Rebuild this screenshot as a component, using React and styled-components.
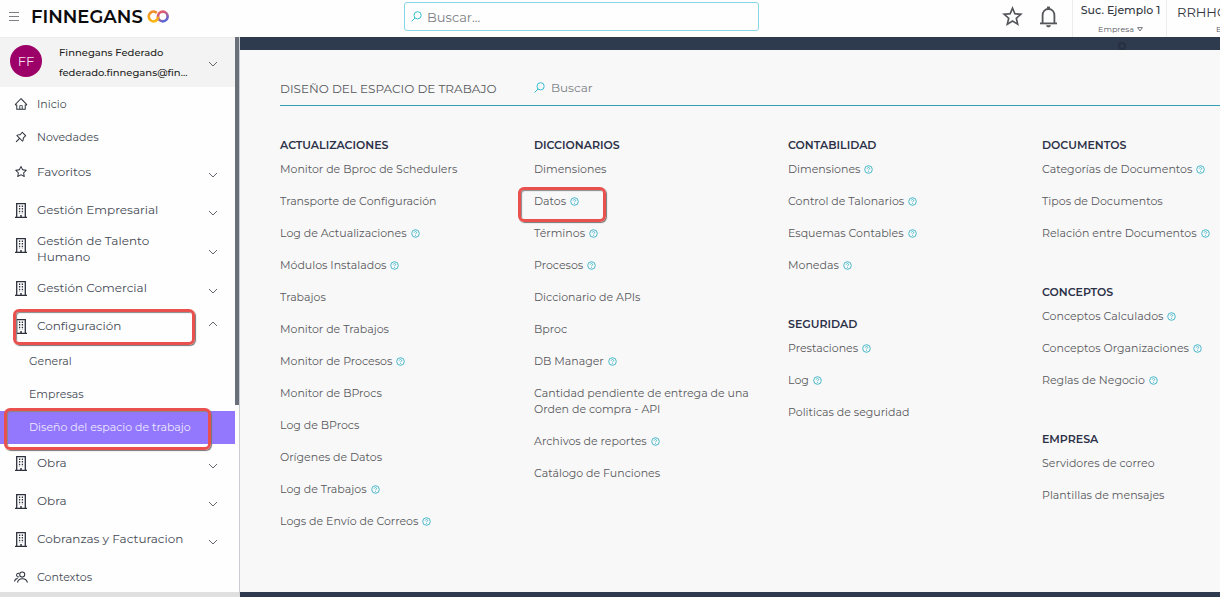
// Import necessary dependencies
import React from 'react';
import styled, { createGlobalStyle, css } from 'styled-components';
import { AiOutlineHome, AiOutlinePushpin, AiOutlineStar } from 'react-icons/ai';
import { MdStarBorder } from 'react-icons/md';

const GlobalStyle = createGlobalStyle`
  *, *::before, *::after {
    box-sizing: border-box;
  }

  body {
    margin: 0;
    background-color: #2e3a4d;
    font-family: Montserrat, Inter, "Liberation Sans", sans-serif;
    color: #585a5e;
    overflow: hidden;
  }

  button, input {
    font-family: inherit;
    color: inherit;
  }

  button {
    border: 0;
    padding: 0;
    background: none;
    cursor: pointer;
  }

  a {
    color: inherit;
    text-decoration: none;
  }
`;

const Page = styled.div`
  display: flex;
  flex-direction: column;
  height: 100vh;
`;

// Top bar
const Header = styled.header`
  display: flex;
  flex: none;
  height: 37px;
  background-color: #fefefe;
  overflow: hidden;
`;

const Brand = styled.div`
  display: flex;
  align-items: center;
  flex: none;
  width: 240px;
  padding: 0 0 4px 9px;
`;

const MenuButton = styled.button`
  display: flex;
  margin-right: 12px;
`;

const BrandName = styled.span`
  font-size: 18px;
  font-weight: 600;
  line-height: 24px;
  color: #0b0b0d;
  margin-right: 4px;
`;

const SearchArea = styled.div`
  flex: 1;
  min-width: 0;
  padding: 2px 241px 0 164px;
`;

const SearchBox = styled.label`
  display: flex;
  align-items: center;
  gap: 5px;
  height: 29px;
  padding: 0 6px;
  border: 1px solid #86d6e8;
  border-radius: 3px;
`;

const SearchInput = styled.input`
  flex: 1;
  min-width: 0;
  border: 0;
  padding: 0;
  outline: none;
  background: none;
  font-size: ${(props) => (props.$small ? '12px' : '13px')};

  &::placeholder {
    color: #7c7f85;
    opacity: 1;
  }
`;

const Actions = styled.div`
  display: flex;
  flex: none;
  width: 220px;
`;

const ActionButton = styled.button`
  display: flex;
  align-items: center;
  flex: none;
  height: 33px;
  padding-right: 14px;
  color: #55565a;
`;

const Selector = styled.button`
  display: flex;
  flex-direction: column;
  align-items: center;
  flex: none;
  width: ${(props) => props.$width};
  padding: 2px 8px 0 10px;
  border-left: 1px solid #ececee;
`;

const SelectorName = styled.span`
  font-size: ${(props) => (props.$large ? '13px' : '11px')};
  font-weight: ${(props) => (props.$large ? 400 : 500)};
  line-height: ${(props) => (props.$large ? '20px' : '16px')};
  color: #32363f;
  white-space: nowrap;
  align-self: ${(props) => (props.$large ? 'flex-start' : 'center')};
`;

const SelectorKind = styled.span`
  display: flex;
  align-items: center;
  gap: 3px;
  margin-top: auto;
  padding-bottom: 2px;
  font-size: 8px;
  line-height: 12px;
  color: #55585f;
`;

// Side menu
const Body = styled.div`
  display: flex;
  flex: 1;
  min-height: 0;
`;

const Sidebar = styled.aside`
  position: relative;
  flex: none;
  width: 240px;
  background-color: #fefefe;
  border-right: 1px solid #c9ccd1;
  border-bottom: 5px solid #e0e0e0;
  overflow: hidden;
`;

const ScrollThumb = styled.div`
  position: absolute;
  top: 0;
  right: 0;
  width: 4px;
  height: 368px;
  background-color: #69707a;
`;

const Profile = styled.button`
  display: flex;
  align-items: center;
  width: 235px;
  height: 50px;
  padding: 0 17px 4px 10px;
  border-top: 1px solid #ececec;
  background-color: #f3f3f3;
  text-align: left;
`;

const Avatar = styled.span`
  flex: none;
  width: 32px;
  height: 32px;
  border-radius: 50%;
  background-color: #9c0068;
  color: #f6dfee;
  font-size: 13px;
  line-height: 32px;
  text-align: center;
`;

const ProfileText = styled.span`
  flex: 1;
  margin-left: 17px;
  font-size: 10px;
  font-weight: 500;
  line-height: 20px;
  color: #1d1e22;
  padding-top: 4px;
`;

const ProfileLine = styled.span`
  display: block;
`;

const Nav = styled.nav`
  width: 235px;
`;

const highlight = css`
  position: relative;

  &::after {
    content: '';
    position: absolute;
    border: 3px solid #ea504d;
    border-radius: 6px;
    box-shadow: 1px 1px 1px #777, inset 1px 1px 1px #888;
    pointer-events: none;
  }
`;

const NavRow = styled.button`
  display: flex;
  align-items: center;
  width: 100%;
  min-height: ${(props) => (props.$leaf ? '33px' : '38px')};
  padding: 4px 17px 4px 14px;
  font-size: ${(props) => (props.$small ? '11px' : '12px')};
  line-height: 16px;
  color: #454a55;
  text-align: left;

  ${(props) => props.$marked && css`
    ${highlight}

    &::after {
      inset: 2px 40px 0 13px;
    }
  `}
`;

const NavIcon = styled.span`
  display: flex;
  justify-content: center;
  flex: none;
  width: 14px;
  margin-right: 9px;
  padding-bottom: ${(props) => (props.$wrap ? '8px' : '0')};
  color: #2c313c;
`;

const NavLabel = styled.span`
  flex: 1;
  padding-right: 8px;
`;

const ChevronBox = styled.span`
  display: flex;
  flex: none;
  padding-top: ${(props) => (props.$up ? '0' : '6px')};
  padding-bottom: ${(props) => (props.$up ? '4px' : '0')};
`;

const SubLink = styled.a`
  display: block;
  height: 33px;
  padding-left: 29px;
  font-size: 11px;
  line-height: 33px;
  color: ${(props) => (props.$active ? '#eee9ff' : '#454a55')};
  background-color: ${(props) => (props.$active ? '#9378fd' : 'transparent')};

  ${(props) => props.$active && css`
    ${highlight}

    &::after {
      inset: -3px 24px -6px 4px;
    }
  `}
`;

// Workspace panel
const Main = styled.main`
  position: relative;
  flex: 1;
  min-width: 0;
  padding: 13px 0 5px;
  background-color: #2e3a4d;
`;

const Knob = styled.span`
  position: absolute;
  top: 5px;
  right: 94px;
  width: 8px;
  height: 8px;
  border: 2px solid #273142;
  border-radius: 50%;
`;

const Panel = styled.section`
  height: 100%;
  padding: 22px 0 0 40px;
  background-color: #f8f8f8;
  overflow: hidden;
`;

const PanelHead = styled.div`
  display: flex;
  align-items: center;
  height: 34px;
  border-bottom: 1px solid #35a0b4;
`;

const PanelTitle = styled.h1`
  flex: none;
  width: 254px;
  margin: 0;
  font-size: 12px;
  font-weight: 400;
  line-height: 16px;
  color: #55575b;
`;

const PanelSearch = styled.label`
  display: flex;
  align-items: center;
  gap: 6px;
  padding-bottom: 2px;
`;

const Columns = styled.div`
  display: grid;
  grid-template-columns: repeat(4, minmax(254px, 1fr));
  padding-top: 31px;
`;

const Group = styled.section`
  margin-bottom: 43px;
`;

const GroupTitle = styled.h2`
  margin: 0 0 8px;
  font-size: 11px;
  font-weight: 600;
  line-height: 16px;
  color: #2c3148;
`;

const LinkList = styled.ul`
  display: flex;
  flex-direction: column;
  gap: 16px;
  margin: 0;
  padding: 0;
  list-style: none;
`;

const LinkItem = styled.li`
  display: flex;
  align-items: center;
  gap: 4px;
  max-width: 226px;
  font-size: 11px;
  line-height: 16px;
  color: #58595d;

  ${(props) => props.$marked && css`
    ${highlight}

    &::after {
      top: -6px;
      left: -16px;
      width: 88px;
      height: 35px;
    }
  `}
`;

const HelpButton = styled.button`
  display: flex;
  flex: none;
`;

const Magnifier = () => (
  <svg width="11" height="11" viewBox="0 0 11 11" fill="none" stroke="#35bfd2" aria-hidden="true">
    <circle cx="6.6" cy="4.3" r="3.6" />
    <path d="M4 7L.6 10.4" />
  </svg>
);

const Chevron = ({ up }) => (
  <svg width="10" height="6" viewBox="0 0 10 6" fill="none" stroke="#63666c" aria-hidden="true">
    <path d={up ? 'M1 5L5 1L9 5' : 'M1 1L5 5L9 1'} />
  </svg>
);

const Building = () => (
  <svg width="12" height="15" viewBox="0 0 12 15" fill="none" stroke="currentColor" aria-hidden="true">
    <path d="M1.7 14V.7H10.3V14M0 14.3H12" strokeWidth="1.3" />
    <path d="M4.6 2.5V10.5M7.4 2.5V10.5" strokeWidth="1.3" strokeDasharray="1.5 1.1" />
    <path d="M6 12V14" strokeWidth="1.5" />
  </svg>
);

const People = () => (
  <svg width="15" height="13" viewBox="0 0 15 13" fill="none" stroke="currentColor" strokeWidth="1.1" aria-hidden="true">
    <circle cx="8.8" cy="3.4" r="2.7" />
    <path d="M5.6 2.2C3.6 1.2 1.9 3.6 3.2 5.2C3.8 6 4.9 6.1 5.7 5.6" />
    <path d="M3.8 12C4.4 6.6 13.2 6.2 14.4 12" />
    <path d="M.6 10.8C.8 9 2 7.8 4 7.6" />
  </svg>
);

const Bell = () => (
  <svg width="19" height="22" viewBox="0 0 19 22" fill="none" stroke="currentColor" strokeWidth="1.8" aria-hidden="true">
    <path d="M3.6 17V9.4C3.6 5.6 6 3 9.5 3S15.4 5.6 15.4 9.4V17" />
    <path d="M1 17.4H18" />
    <path d="M9.5 .6V3" strokeWidth="3" />
    <path d="M7 19.2H12C11.6 20.6 10.8 21.3 9.5 21.3S7.4 20.6 7 19.2Z" fill="currentColor" stroke="none" />
  </svg>
);

const LoopLogo = () => (
  <svg width="22" height="13" viewBox="0 0 22 13" fill="none" strokeWidth="2.7" aria-hidden="true">
    <defs>
      <linearGradient id="loopLeft" x1="0" y1="0" x2="0" y2="1">
        <stop offset="0" stopColor="#f08a2c" />
        <stop offset="1" stopColor="#fbb610" />
      </linearGradient>
      <linearGradient id="loopRight" x1="0" y1="0" x2="0.6" y2="1">
        <stop offset="0" stopColor="#ee5a5e" />
        <stop offset="0.5" stopColor="#c0608c" />
        <stop offset="1" stopColor="#5a66d8" />
      </linearGradient>
    </defs>
    <circle cx="15.8" cy="6.5" r="4.8" stroke="url(#loopRight)" />
    <path d="M9.8 2.9A4.8 4.8 0 1 0 9.8 10.1C10.6 9.2 11 8.2 11.1 6.6" stroke="url(#loopLeft)" />
  </svg>
);

const HelpIcon = () => (
  <svg width="9" height="9" viewBox="0 0 9 9" fill="none" stroke="#36b2c6" aria-hidden="true">
    <circle cx="4.5" cy="4.5" r="3.8" strokeWidth="0.9" />
    <path d="M3.2 3.6C3.3 2.1 5.8 2.2 5.7 3.6C5.6 4.4 4.5 4.3 4.5 5.3M4.5 6V6.9" strokeWidth="0.8" />
  </svg>
);

const DropMark = () => (
  <svg width="6" height="5" viewBox="0 0 6 5" fill="none" stroke="#55585f" strokeWidth="0.8" aria-hidden="true">
    <path d="M.6 .6H5.4L3 4Z" />
  </svg>
);

const menu = [
  { id: 1, label: 'Inicio', icon: <AiOutlineHome size={14} />, leaf: true, small: true },
  { id: 2, label: 'Novedades', icon: <AiOutlinePushpin size={14} />, leaf: true, small: true },
  { id: 3, label: 'Favoritos', icon: <AiOutlineStar size={14} />, chevron: true },
  { id: 4, label: 'Gestión Empresarial', icon: <Building />, chevron: true },
  { id: 5, label: 'Gestión de Talento Humano', icon: <Building />, chevron: true, wrap: true },
  { id: 6, label: 'Gestión Comercial', icon: <Building />, chevron: true },
  {
    id: 7,
    label: 'Configuración',
    icon: <Building />,
    chevron: true,
    marked: true,
    children: ['General', 'Empresas', 'Diseño del espacio de trabajo'],
  },
  { id: 8, label: 'Obra', icon: <Building />, chevron: true },
  { id: 9, label: 'Obra', icon: <Building />, chevron: true },
  { id: 10, label: 'Cobranzas y Facturacion', icon: <Building />, chevron: true },
  { id: 11, label: 'Contextos', icon: <People />, small: true },
];

const columns = [
  [
    {
      title: 'ACTUALIZACIONES',
      links: [
        { text: 'Monitor de Bproc de Schedulers' },
        { text: 'Transporte de Configuración' },
        { text: 'Log de Actualizaciones', help: true },
        { text: 'Módulos Instalados', help: true },
        { text: 'Trabajos' },
        { text: 'Monitor de Trabajos' },
        { text: 'Monitor de Procesos', help: true },
        { text: 'Monitor de BProcs' },
        { text: 'Log de BProcs' },
        { text: 'Orígenes de Datos' },
        { text: 'Log de Trabajos', help: true },
        { text: 'Logs de Envío de Correos', help: true },
      ],
    },
  ],
  [
    {
      title: 'DICCIONARIOS',
      links: [
        { text: 'Dimensiones' },
        { text: 'Datos', help: true, marked: true },
        { text: 'Términos', help: true },
        { text: 'Procesos', help: true },
        { text: 'Diccionario de APIs' },
        { text: 'Bproc' },
        { text: 'DB Manager', help: true },
        { text: 'Cantidad pendiente de entrega de una Orden de compra - API' },
        { text: 'Archivos de reportes', help: true },
        { text: 'Catálogo de Funciones' },
      ],
    },
  ],
  [
    {
      title: 'CONTABILIDAD',
      links: [
        { text: 'Dimensiones', help: true },
        { text: 'Control de Talonarios', help: true },
        { text: 'Esquemas Contables', help: true },
        { text: 'Monedas', help: true },
      ],
    },
    {
      title: 'SEGURIDAD',
      links: [
        { text: 'Prestaciones', help: true },
        { text: 'Log', help: true },
        { text: 'Politicas de seguridad' },
      ],
    },
  ],
  [
    {
      title: 'DOCUMENTOS',
      links: [
        { text: 'Categorías de Documentos', help: true },
        { text: 'Tipos de Documentos' },
        { text: 'Relación entre Documentos', help: true },
      ],
    },
    {
      title: 'CONCEPTOS',
      links: [
        { text: 'Conceptos Calculados', help: true },
        { text: 'Conceptos Organizaciones', help: true },
        { text: 'Reglas de Negocio', help: true },
      ],
    },
    {
      title: 'EMPRESA',
      links: [
        { text: 'Servidores de correo' },
        { text: 'Plantillas de mensajes' },
      ],
    },
  ],
];

const TopBar = () => (
  <Header>
    <Brand>
      <MenuButton aria-label="Menú">
        <svg width="10" height="9" viewBox="0 0 10 9" stroke="#7d7f83" aria-hidden="true">
          <path d="M0 .5H10M0 4.5H10M0 8.5H10" />
        </svg>
      </MenuButton>
      <BrandName>FINNEGANS</BrandName>
      <LoopLogo />
    </Brand>
    <SearchArea>
      <SearchBox>
        <Magnifier />
        <SearchInput type="text" placeholder="Buscar..." aria-label="Buscar" />
      </SearchBox>
    </SearchArea>
    <Actions>
      <ActionButton aria-label="Favoritos"><MdStarBorder size={25} /></ActionButton>
      <ActionButton aria-label="Notificaciones"><Bell /></ActionButton>
      <Selector $width="94px">
        <SelectorName>Suc. Ejemplo 1</SelectorName>
        <SelectorKind>Empresa <DropMark /></SelectorKind>
      </Selector>
      <Selector $width="142px">
        <SelectorName $large>RRHHC</SelectorName>
        <SelectorKind>Empresa <DropMark /></SelectorKind>
      </Selector>
    </Actions>
  </Header>
);

const SideMenu = () => (
  <Sidebar>
    <Profile>
      <Avatar>FF</Avatar>
      <ProfileText>
        <ProfileLine>Finnegans Federado</ProfileLine>
        <ProfileLine>federado.finnegans@fin...</ProfileLine>
      </ProfileText>
      <ChevronBox><Chevron /></ChevronBox>
    </Profile>
    <Nav>
      {menu.map((item) => (
        <React.Fragment key={item.id}>
          <NavRow $leaf={item.leaf} $small={item.small} $marked={item.marked}>
            <NavIcon $wrap={item.wrap}>{item.icon}</NavIcon>
            <NavLabel>{item.label}</NavLabel>
            {item.chevron && (
              <ChevronBox $up={!!item.children}><Chevron up={!!item.children} /></ChevronBox>
            )}
          </NavRow>
          {item.children && item.children.map((child, index) => (
            <SubLink key={child} href="#" $active={index === 2}>{child}</SubLink>
          ))}
        </React.Fragment>
      ))}
    </Nav>
    <ScrollThumb />
  </Sidebar>
);

const App = () => {
  return (
    <Page>
      <GlobalStyle />
      <TopBar />
      <Body>
        <SideMenu />
        <Main>
          <Knob />
          <Panel>
            <PanelHead>
              <PanelTitle>DISEÑO DEL ESPACIO DE TRABAJO</PanelTitle>
              <PanelSearch>
                <Magnifier />
                <SearchInput $small type="text" placeholder="Buscar" aria-label="Buscar en el espacio" />
              </PanelSearch>
            </PanelHead>
            <Columns>
              {columns.map((groups) => (
                <div key={groups[0].title}>
                  {groups.map((group) => (
                    <Group key={group.title}>
                      <GroupTitle>{group.title}</GroupTitle>
                      <LinkList>
                        {group.links.map((link) => (
                          <LinkItem key={link.text} $marked={link.marked}>
                            <a href="#">{link.text}</a>
                            {link.help && (
                              <HelpButton aria-label={`Ayuda: ${link.text}`}><HelpIcon /></HelpButton>
                            )}
                          </LinkItem>
                        ))}
                      </LinkList>
                    </Group>
                  ))}
                </div>
              ))}
            </Columns>
          </Panel>
        </Main>
      </Body>
    </Page>
  );
};

export default App;
